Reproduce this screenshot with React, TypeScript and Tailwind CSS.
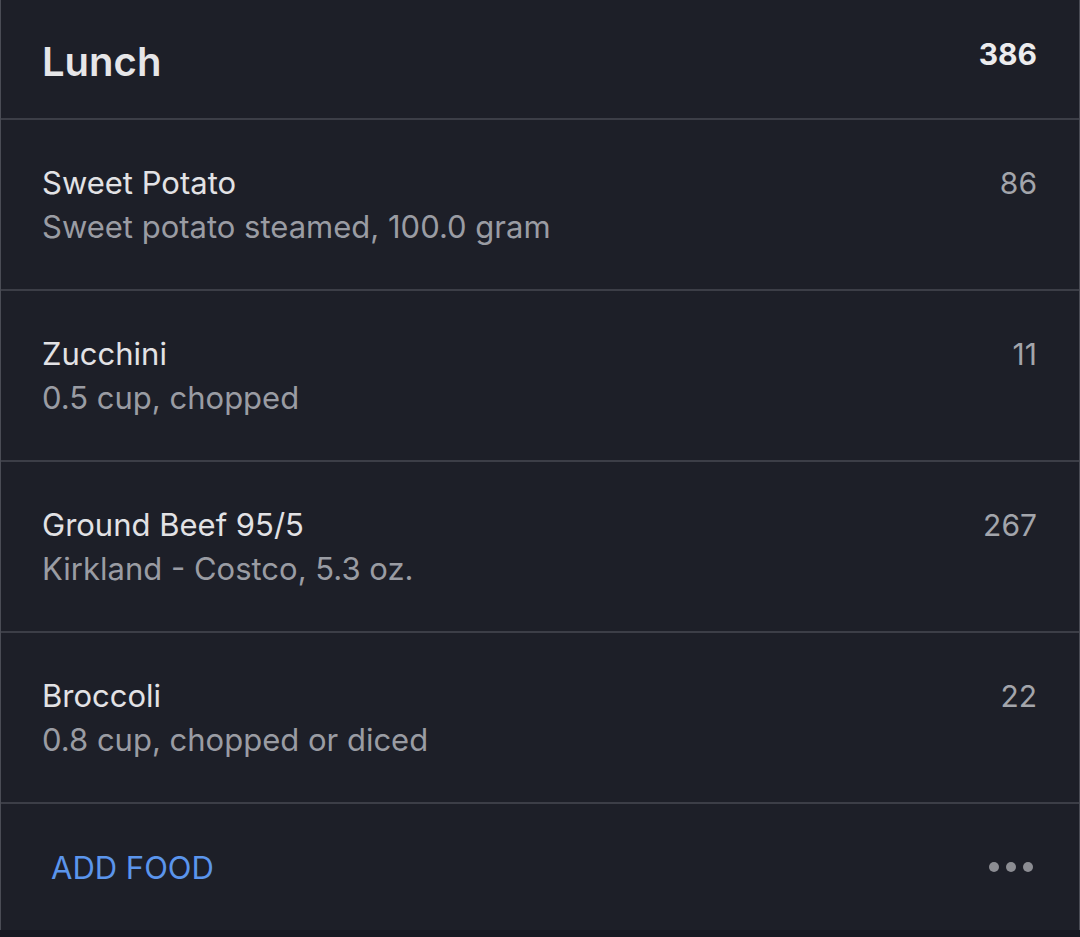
import React from 'react';

const foods = [
  { name: 'Sweet Potato', detail: 'Sweet potato steamed, 100.0 gram', kcal: 86 },
  { name: 'Zucchini', detail: '0.5 cup, chopped', kcal: 11 },
  { name: 'Ground Beef 95/5', detail: 'Kirkland - Costco, 5.3 oz.', kcal: 267 },
  { name: 'Broccoli', detail: '0.8 cup, chopped or diced', kcal: 22 },
];

export default function App() {
  return (
    <div className="min-h-[937px] w-[1080px] bg-[#161821]" style={{ fontFamily: 'Inter, "Noto Sans", sans-serif' }}>
      <div className="flex flex-col border-x border-[#4a4c55] bg-[#1d1f28]">
        {/* header */}
        <div className="flex h-[120px] items-start justify-between border-b-2 border-[#3c3e47] pl-[41px] pr-[42px]">
          <h2 className="mt-[38px] text-[40px] font-semibold leading-[48px] text-[#e6e6e8]">Lunch</h2>
          <span className="mt-[36px] text-[30px] font-bold leading-[36px] text-[#ececee]">386</span>
        </div>

        {foods.map((f) => (
          <div
            key={f.name}
            className="flex h-[171px] flex-col justify-center gap-[8px] border-b-2 border-[#3c3e47] pl-[41px] pr-[42px]"
          >
            <div className="flex items-center justify-between">
              <span className="text-[31px] leading-[36px] text-[#e2e2e5]">{f.name}</span>
              <span className="text-[30px] leading-[36px] text-[#a3a5ab]">{f.kcal}</span>
            </div>
            <span className="text-[31px] leading-[36px] text-[#9a9ca3]">{f.detail}</span>
          </div>
        ))}

        {/* footer */}
        <div className="flex h-[126px] items-center justify-between pl-[50px] pr-[46px]">
          <button className="mt-[2px] text-[31px] leading-[36px] text-[#5b95ec]">ADD FOOD</button>
          <div className="flex items-center gap-[7px]">
            <span className="h-[10px] w-[10px] rounded-full bg-[#8c8d93]" />
            <span className="h-[10px] w-[10px] rounded-full bg-[#8c8d93]" />
            <span className="h-[10px] w-[10px] rounded-full bg-[#8c8d93]" />
          </div>
        </div>
      </div>
    </div>
  );
}
